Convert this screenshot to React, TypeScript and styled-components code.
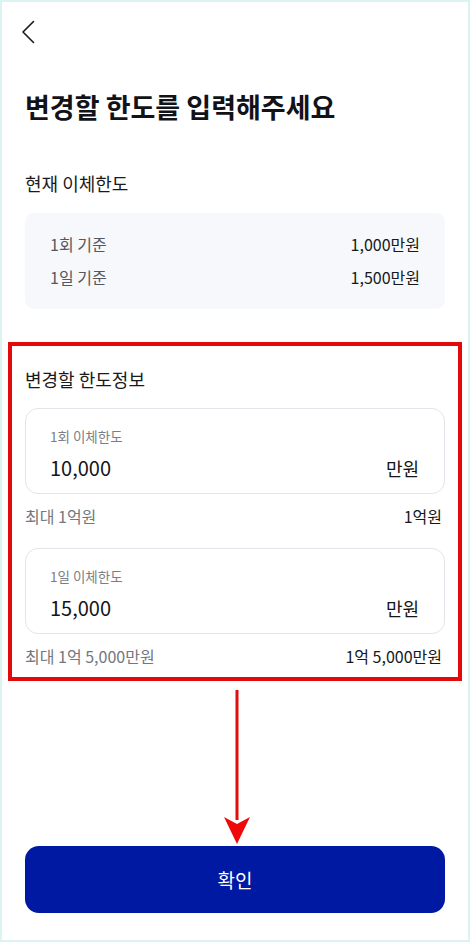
import React from "react";
import styled, { createGlobalStyle } from "styled-components";

const Global = createGlobalStyle`
  html, body { margin: 0; padding: 0; background: #ffffff; }
  * { box-sizing: border-box; }
  body { font-family: "Noto Sans CJK KR", "Noto Sans", sans-serif; color: #111111; }
`;

const Screen = styled.div`
  position: relative;
  width: 470px;
  height: 942px;
  border: 2px solid #dcf4f1;
  background: #ffffff;
  display: flex;
  flex-direction: column;
`;

const Header = styled.div`
  height: 58px;
  padding: 17px 0 0 15px;
`;

const BackButton = styled.button`
  border: none;
  background: none;
  padding: 0;
  width: 22px;
  height: 26px;
  display: flex;
  align-items: center;
  justify-content: center;
  cursor: pointer;
`;

const Title = styled.h1`
  margin: 29px 0 0 23px;
  font-size: 27px;
  line-height: 36px;
  font-weight: 700;
  color: #111318;
`;

const SectionTitle = styled.h2<{ $top: number }>`
  margin: ${(p) => p.$top}px 0 0 0;
  font-size: 18px;
  line-height: 24px;
  font-weight: 400;
  color: #1a1a1a;
`;

const CurrentSection = styled.div`
  padding: 0 23px;
`;

const InfoBox = styled.div`
  margin-top: 18px;
  background: #f7f8fb;
  border-radius: 9px;
  padding: 20px 25px 21px 25px;
  display: flex;
  flex-direction: column;
  gap: 11px;
`;

const InfoRow = styled.div`
  display: flex;
  justify-content: space-between;
  align-items: center;
  font-size: 16px;
  line-height: 22px;
`;

const InfoLabel = styled.span`
  color: #55585e;
`;

const InfoValue = styled.span`
  color: #16181c;
`;

const EditSection = styled.div`
  margin: 33px 6px 0 6px;
  border: 4px solid #e20a0a;
  padding: 21px 13px 10px 13px;
`;

const InputCard = styled.div<{ $top: number }>`
  margin-top: ${(p) => p.$top}px;
  border: 1px solid #e3e5ea;
  border-radius: 13px;
  height: 86px;
  padding: 17px 25px 0 24px;
`;

const InputLabel = styled.div`
  font-size: 13.5px;
  line-height: 20px;
  color: #7a7e86;
`;

const InputRow = styled.div`
  margin-top: 9px;
  display: flex;
  justify-content: space-between;
  align-items: center;
  line-height: 26px;
`;

const InputValue = styled.span`
  font-size: 20px;
  color: #141518;
`;

const Unit = styled.span`
  font-size: 18px;
  color: #141518;
`;

const HelperRow = styled.div`
  margin-top: 11px;
  display: flex;
  justify-content: space-between;
  align-items: center;
  font-size: 16px;
  line-height: 22px;
`;

const HelperLabel = styled.span`
  color: #73777e;
`;

const HelperValue = styled.span`
  color: #16181c;
  margin-right: 3px;
`;

const Spacer = styled.div`
  flex: 1;
`;

const ConfirmButton = styled.button`
  margin: 0 23px 27px 23px;
  height: 67px;
  border: none;
  border-radius: 14px;
  background: #0019a3;
  color: #ffffff;
  font-family: "Noto Sans CJK KR", "Noto Sans", sans-serif;
  font-size: 19px;
  font-weight: 400;
`;

const ArrowOverlay = styled.svg`
  position: absolute;
  left: 218px;
  top: 684px;
`;

export default function App() {
  return (
    <>
      <Global />
      <Screen>
        <Header>
          <BackButton aria-label="뒤로">
            <svg width="14" height="24" viewBox="0 0 14 24" fill="none">
              <path d="M12.5 1.5L2 12l10.5 10.5" stroke="#1a1a1a" strokeWidth="1.6" strokeLinecap="round" strokeLinejoin="round" />
            </svg>
          </BackButton>
        </Header>
        <Title>변경할 한도를 입력해주세요</Title>
        <CurrentSection>
          <SectionTitle $top={46}>현재 이체한도</SectionTitle>
          <InfoBox>
            <InfoRow>
              <InfoLabel>1회 기준</InfoLabel>
              <InfoValue>1,000만원</InfoValue>
            </InfoRow>
            <InfoRow>
              <InfoLabel>1일 기준</InfoLabel>
              <InfoValue>1,500만원</InfoValue>
            </InfoRow>
          </InfoBox>
        </CurrentSection>
        <EditSection>
          <SectionTitle $top={0}>변경할 한도정보</SectionTitle>
          <InputCard $top={17}>
            <InputLabel>1회 이체한도</InputLabel>
            <InputRow>
              <InputValue>10,000</InputValue>
              <Unit>만원</Unit>
            </InputRow>
          </InputCard>
          <HelperRow>
            <HelperLabel>최대 1억원</HelperLabel>
            <HelperValue>1억원</HelperValue>
          </HelperRow>
          <InputCard $top={21}>
            <InputLabel>1일 이체한도</InputLabel>
            <InputRow>
              <InputValue>15,000</InputValue>
              <Unit>만원</Unit>
            </InputRow>
          </InputCard>
          <HelperRow>
            <HelperLabel>최대 1억 5,000만원</HelperLabel>
            <HelperValue>1억 5,000만원</HelperValue>
          </HelperRow>
        </EditSection>
        <Spacer />
        <ConfirmButton>확인</ConfirmButton>
        <ArrowOverlay width="34" height="162" viewBox="0 0 34 162">
          <rect x="15.5" y="4" width="3" height="130" fill="#e00d0d" />
          <path d="M4 131 L17 158 L30 131 L17 138 Z" fill="#ee0a0a" />
        </ArrowOverlay>
      </Screen>
    </>
  );
}
